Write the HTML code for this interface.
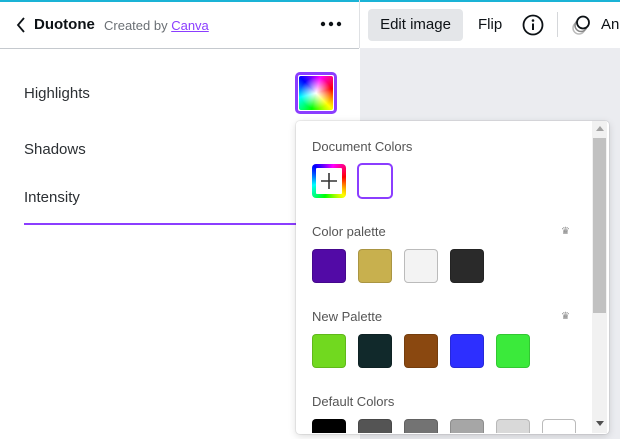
<!DOCTYPE html>
<html><head><meta charset="utf-8"><style>
*{box-sizing:border-box;margin:0;padding:0}
body{width:620px;height:439px;overflow:hidden;position:relative;background:#fff;font-family:"Liberation Sans",sans-serif;color:#0d1216}
.a{position:absolute}
.grad{background:conic-gradient(from 315deg,#0000ff,#ff00ff,#ff0000,#ffff00,#00ff00,#00ffff,#0000ff)}
.sw{position:absolute;width:34px;height:34px;border-radius:4px;border:1px solid rgba(0,0,0,.15)}
.lbl{position:absolute;left:312px;font-size:13px;color:#555}
</style></head><body>
<div class="a" style="left:0;top:0;width:620px;height:2px;background:#1ab3d6"></div>
<div class="a" style="left:0;top:48px;width:359px;height:1px;background:#c5c9ce"></div>
<div class="a" style="left:359px;top:0;width:1px;height:48px;background:#dfe1e4"></div>
<div class="a" style="left:360px;top:48px;width:260px;height:391px;background:#ebecf0"></div>
<svg class="a" style="left:15px;top:16px" width="12" height="18" viewBox="0 0 12 18"><path d="M9 2 L3 9 L9 16" fill="none" stroke="#0d1216" stroke-width="1.8"/></svg>
<div class="a" style="left:34px;top:16px;font-size:15px;font-weight:bold">Duotone</div>
<div class="a" style="left:104px;top:18px;font-size:13px;color:#6b7075">Created by <span style="color:#8b3dff;text-decoration:underline">Canva</span></div>
<svg class="a" style="left:320px;top:21px" width="22" height="6" viewBox="0 0 22 6"><circle cx="3" cy="3" r="2.2" fill="#0d1216"/><circle cx="11" cy="3" r="2.2" fill="#0d1216"/><circle cx="19" cy="3" r="2.2" fill="#0d1216"/></svg>
<div class="a" style="left:368px;top:9px;width:95px;height:32px;background:#e4e6e9;border-radius:4px;font-size:15px;line-height:32px;text-align:center">Edit image</div>
<div class="a" style="left:478px;top:16px;font-size:15px">Flip</div>
<svg class="a" style="left:522px;top:14px" width="22" height="22" viewBox="0 0 22 22"><circle cx="11" cy="11" r="9.5" fill="none" stroke="#0d1216" stroke-width="1.8"/><circle cx="11" cy="6.5" r="1.3" fill="#0d1216"/><path d="M11 9.5V16" stroke="#0d1216" stroke-width="2"/></svg>
<div class="a" style="left:557px;top:12px;width:1px;height:25px;background:#d5d7da"></div>
<svg class="a" style="left:570px;top:13px" width="24" height="24" viewBox="0 0 24 24"><circle cx="9" cy="15" r="6" fill="none" stroke="#bbb" stroke-width="1.5"/><circle cx="11" cy="12.5" r="6" fill="#fff" stroke="#888" stroke-width="1.5"/><circle cx="13" cy="9.5" r="6" fill="#fff" stroke="#0d1216" stroke-width="1.8"/></svg>
<div class="a" style="left:601px;top:16px;font-size:15px">An</div>
<div class="a" style="left:24px;top:85px;font-size:15px;color:#2b2f33">Highlights</div>
<div class="a" style="left:24px;top:141px;font-size:15px;color:#2b2f33">Shadows</div>
<div class="a" style="left:24px;top:189px;font-size:15px;color:#2b2f33">Intensity</div>
<div class="a" style="left:24px;top:223px;width:272px;height:2px;background:#8b3dff"></div>
<div class="a" style="left:295px;top:72px;width:42px;height:42px;border:3px solid #8b3dff;border-radius:5px;padding:1px;background:#fff"><div class="grad" style="width:100%;height:100%;border-radius:2px;position:relative"><div style="position:absolute;inset:0;background:radial-gradient(circle,#fff 0%,rgba(255,255,255,0) 65%)"></div></div></div>
<div class="a" style="left:296px;top:121px;width:313px;height:313px;background:#fff;border-radius:4px;box-shadow:0 0 0 1px rgba(0,0,0,.06),0 2px 8px rgba(0,0,0,.15)"></div>
<div class="a" style="left:592px;top:121px;width:15px;height:312px;background:#f1f1f1"></div>
<div class="a" style="left:593px;top:138px;width:13px;height:175px;background:#c1c1c1"></div>
<div class="a" style="left:596px;top:126px;width:0;height:0;border-left:4px solid transparent;border-right:4px solid transparent;border-bottom:5px solid #a3a3a3"></div>
<div class="a" style="left:596px;top:421px;width:0;height:0;border-left:4px solid transparent;border-right:4px solid transparent;border-top:5px solid #505050"></div>
<div class="lbl" style="top:139px">Document Colors</div>
<div class="a grad" style="left:312px;top:164px;width:34px;height:34px;border-radius:4px;padding:4px"><svg width="26" height="26" viewBox="0 0 26 26" style="display:block;background:#fff;border-radius:1px"><path d="M13 5V21M5 13H21" stroke="#333" stroke-width="1.6"/></svg></div>
<div class="a" style="left:357px;top:163px;width:36px;height:36px;border:2px solid #8b3dff;border-radius:5px"></div>
<div class="lbl" style="top:224px">Color palette</div>
<div class="a" style="left:561px;top:226px;font-size:10px;color:#888">♛</div>
<div class="sw" style="left:312px;top:249px;background:#520aa6"></div>
<div class="sw" style="left:358px;top:249px;background:#c8b04e"></div>
<div class="sw" style="left:404px;top:249px;background:#f3f3f3;border-color:#bbb"></div>
<div class="sw" style="left:450px;top:249px;background:#2a2a2a"></div>
<div class="lbl" style="top:309px">New Palette</div>
<div class="a" style="left:561px;top:311px;font-size:10px;color:#888">♛</div>
<div class="sw" style="left:312px;top:334px;background:#71d91f"></div>
<div class="sw" style="left:358px;top:334px;background:#11292b"></div>
<div class="sw" style="left:404px;top:334px;background:#8a4810"></div>
<div class="sw" style="left:450px;top:334px;background:#2d2fff"></div>
<div class="sw" style="left:496px;top:334px;background:#3bea3b"></div>
<div class="lbl" style="top:394px">Default Colors</div>
<div class="a" style="left:296px;top:419px;width:296px;height:14px;overflow:hidden">
<div class="sw" style="left:16px;top:0;background:#000"></div>
<div class="sw" style="left:62px;top:0;background:#545454"></div>
<div class="sw" style="left:108px;top:0;background:#737373"></div>
<div class="sw" style="left:154px;top:0;background:#a6a6a6"></div>
<div class="sw" style="left:200px;top:0;background:#d9d9d9"></div>
<div class="sw" style="left:246px;top:0;background:#fff;border-color:#bbb"></div>
</div>
</body></html>
